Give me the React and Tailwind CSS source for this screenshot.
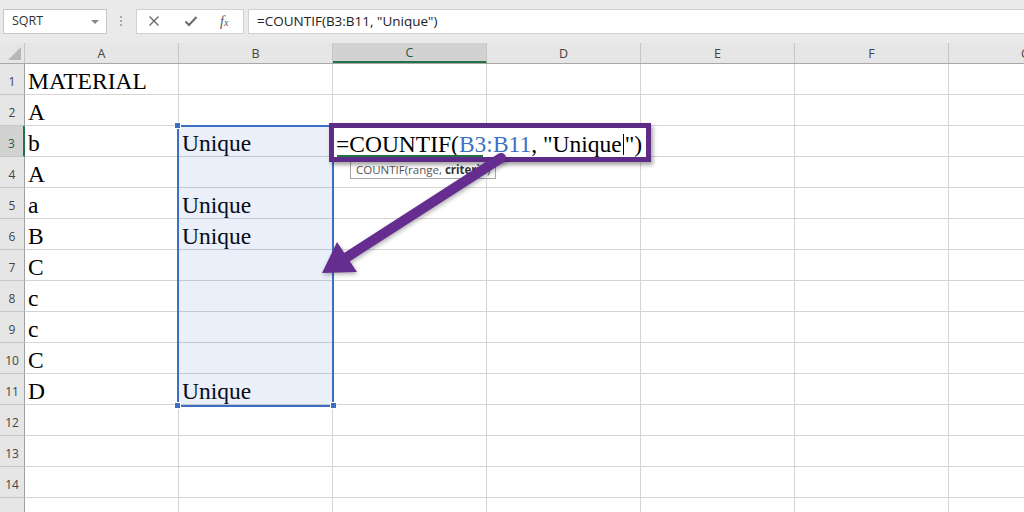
import React from 'react';

const COLS = ['A', 'B', 'C', 'D', 'E', 'F', 'G'];
const ROWS = Array.from({ length: 15 }, (_, i) => i + 1);

const colA = ['MATERIAL', 'A', 'b', 'A', 'a', 'B', 'C', 'c', 'c', 'C', 'D'];
const colB = { 3: 'Unique', 5: 'Unique', 6: 'Unique', 11: 'Unique' };

function cellText(row, col) {
  if (col === 'A') return colA[row - 1] || '';
  if (col === 'B') return colB[row] || '';
  return '';
}

function Toolbar() {
  return (
    <div className="flex h-[43px] items-center bg-[#eaeaea] pl-[3px] pb-[1px] font-['Open_Sans',sans-serif]">
      <div className="relative flex h-[25px] w-[104px] items-center border border-[#c6c6c6] bg-white pl-[8px] text-[12.5px] text-[#333]">
        SQRT
        <span className="absolute right-[7px] top-[10px] h-0 w-0 border-x-[4px] border-t-[4px] border-x-transparent border-t-[#888]" />
      </div>
      <div className="ml-[13px] flex flex-col gap-[2px]">
        <span className="h-[2px] w-[2px] bg-[#aaa]" />
        <span className="h-[2px] w-[2px] bg-[#aaa]" />
        <span className="h-[2px] w-[2px] bg-[#aaa]" />
      </div>
      <div className="ml-[14px] flex h-[25px] w-[108px] items-center border border-[#d0d0d0] bg-white">
        <svg width="12" height="12" viewBox="0 0 12 12" className="ml-[11px]">
          <path d="M1.5 1.5 L10.5 10.5 M10.5 1.5 L1.5 10.5" stroke="#6a6a6a" strokeWidth="1.4" />
        </svg>
        <svg width="14" height="12" viewBox="0 0 14 12" className="ml-[24px]">
          <path d="M1.5 6.5 L5 10 L12.5 2" stroke="#6a6a6a" strokeWidth="2" fill="none" />
        </svg>
        <span className="ml-[22px] font-['Liberation_Serif',serif] text-[14px] italic text-[#555]">
          f<span className="text-[10px]">x</span>
        </span>
      </div>
      <div className="ml-[4px] mr-[-2px] flex h-[25px] flex-1 items-center border border-[#d0d0d0] bg-white pl-[8px] text-[13.5px] text-[#222]">
        =COUNTIF(B3:B11, "Unique")
      </div>
    </div>
  );
}

function HeaderRow() {
  return (
    <div className="flex h-[21px] border-b border-[#a8a8a8] bg-[#e6e6e6] font-['Open_Sans',sans-serif] text-[12.5px] text-[#444]">
      <div className="flex w-[25px] shrink-0 items-end justify-end border-r border-[#c6c6c6] pb-[3px] pr-[3px]">
        <svg width="13" height="13" viewBox="0 0 13 13">
          <polygon points="13,0 13,13 0,13" fill="#b7b7b7" />
        </svg>
      </div>
      {COLS.map((c) => (
        <div
          key={c}
          className={`flex w-[154px] shrink-0 items-center justify-center border-r border-[#c6c6c6] pt-[2px] ${
            c === 'C' ? 'border-b-2 border-b-[#217346] bg-[#d2d2d2] text-[#2a5a3c]' : ''
          }`}
        >
          {c}
        </div>
      ))}
    </div>
  );
}

function Row({ row }) {
  const active = row === 3;
  return (
    <div className="flex h-[31px] shrink-0">
      <div
        className={`flex w-[25px] shrink-0 items-center justify-center border-b border-r pt-[5px] font-['Open_Sans',sans-serif] text-[12px] ${
          active
            ? 'border-b-[#c6c6c6] border-r-2 border-r-[#217346] bg-[#d2d2d2] text-[#2a5a3c]'
            : 'border-b-[#c6c6c6] border-r-[#a0a0a0] bg-[#e6e6e6] text-[#444]'
        }`}
      >
        {row < 15 ? row : ''}
      </div>
      {COLS.map((c) => (
        <div
          key={c}
          className="flex w-[154px] shrink-0 items-end border-b border-r border-[#d4d4d4] px-[3px] font-['Liberation_Serif','Times_New_Roman',serif] text-[23.5px] leading-[26px] text-black"
        >
          {cellText(row, c)}
        </div>
      ))}
    </div>
  );
}

function Handle({ className }) {
  return <span className={`absolute h-[7px] w-[7px] border border-white bg-[#3c6fc4] ${className}`} />;
}

export default function App() {
  return (
    <div className="relative h-[512px] w-[1024px] overflow-hidden bg-white">
      <Toolbar />
      <HeaderRow />
      <div className="flex flex-col">
        {ROWS.map((r) => (
          <Row key={r} row={r} />
        ))}
      </div>

      {/* reference range B3:B11 */}
      <div className="absolute left-[177px] top-[125px] h-[282px] w-[157px] border-2 border-[#3c6fc4] bg-[#3c6fc4]/[0.11]" />
      <Handle className="left-[174px] top-[122px]" />
      <Handle className="left-[174px] top-[402px]" />
      <Handle className="left-[330px] top-[402px]" />

      {/* function tooltip */}
      <div className="absolute left-[350px] top-[160px] h-[19px] w-[146px] border border-[#a6a6a6] bg-white pl-[5px] font-['Open_Sans',sans-serif] text-[11.5px] leading-[17px] text-[#555]">
        COUNTIF(range, <b className="text-[#333]">criteria</b>)
      </div>

      {/* editing cell, highlighted */}
      <div className="absolute left-[329px] top-[123px] flex h-[39px] w-[322px] items-end border-[5px] border-[#5e2b86] bg-white pl-[2px] font-['Liberation_Serif','Times_New_Roman',serif] text-[23.5px] leading-[26px] text-black shadow-[2px_3px_4px_rgba(0,0,0,0.35)]">
        <span>
          =COUNTIF(<span className="text-[#3c6fc4]">B3:B11</span>, "Unique
          <span className="mx-[1px] inline-block h-[21px] w-px translate-y-[3px] bg-black" />
          ")
        </span>
        <span className="absolute bottom-0 left-[3px] h-[2px] w-[146px] bg-[#217346]" />
      </div>

      {/* annotation arrow */}
      <svg className="pointer-events-none absolute left-0 top-0" width="1024" height="512" viewBox="0 0 1024 512">
        <g style={{ filter: 'drop-shadow(1px 2px 2px rgba(0,0,0,0.3))' }}>
          <line x1="501" y1="158" x2="344" y2="259" stroke="#662d91" strokeWidth="10" strokeLinecap="round" />
          <polygon points="322,273 337,242 357,272" fill="#662d91" />
        </g>
      </svg>
    </div>
  );
}
